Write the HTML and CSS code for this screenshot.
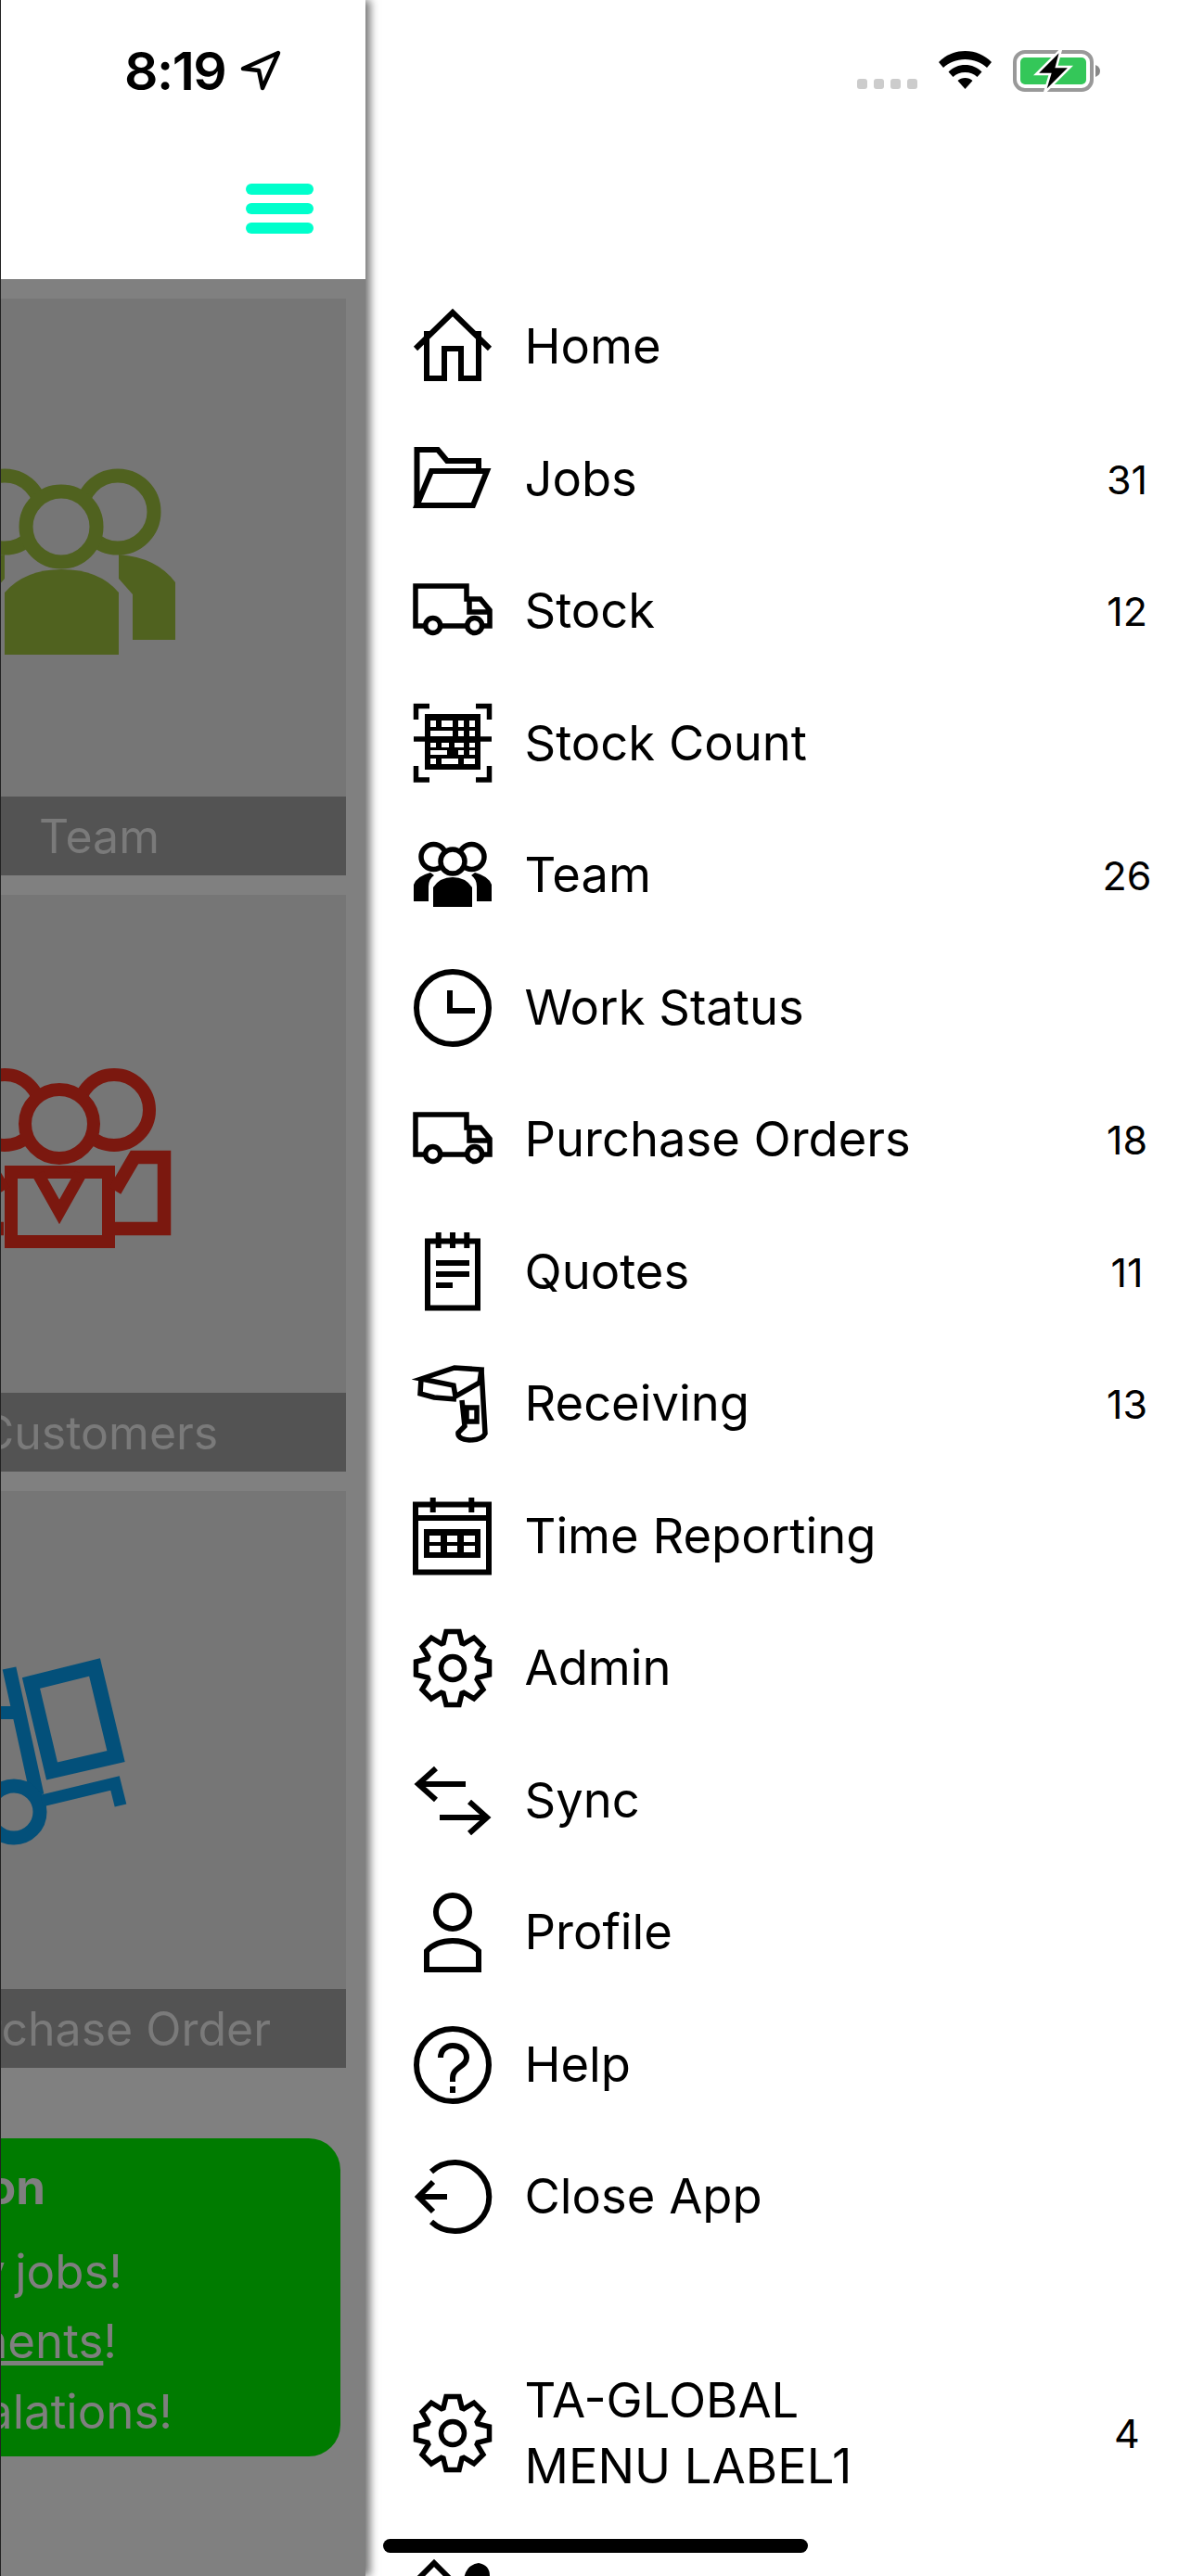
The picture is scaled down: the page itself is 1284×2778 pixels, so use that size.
FILE: index.html
```html
<!DOCTYPE html>
<html>
<head>
  <title>Menu</title>
  <link rel="stylesheet" href="styles.css">
</head>
<body>
  <svg class="defs">
    <symbol id="icon-truck" viewBox="0 0 88 88">
      <path class="line-5" d="M13 60H4V17H59V31H74L84 43V60H76M32 60H58M62 31V45H84"/>
      <circle class="line-5" cx="22.7" cy="59.5" r="8"/>
      <circle class="line-5" cx="67.7" cy="59.5" r="8"/>
    </symbol>
    <symbol id="icon-gear" viewBox="0 0 88 88">
      <polygon class="line-5" points="34,17 37,4.5 51,4.5 54,17 56,17.8 67,11.1 76.9,21 70.2,32 71,34 83.5,37 83.5,51 71,54 70.2,56 76.9,67 67,76.9 56,70.2 54,71 51,83.5 37,83.5 34,71 31.8,70.2 21,76.9 11.1,67 17.8,56 17,54 4.5,51 4.5,37 17,34 17.8,32 11.1,21 21,11.1 32,17.8"/>
      <circle class="line-5" cx="44" cy="44" r="12.5"/>
    </symbol>
  </svg>

  <div class="screen">
    <div class="app">
      <div class="app-header">
        <div class="time-row">
          <span class="time">8:19</span>
          <svg class="location" viewBox="0 0 46 44"><path d="M41 3L3 20L20 22L24 41Z" fill="#fff" stroke="#000" stroke-width="4.5" stroke-linejoin="round"/></svg>
        </div>
        <div class="burger"><i></i><i></i><i></i></div>
      </div>

      <div class="tile">
        <div class="tile-art">
          <svg class="tile-icon" viewBox="0 0 260 210" fill="#50621f">
            <circle cx="68" cy="51" r="39" fill="none" stroke="#50621f" stroke-width="15"/>
            <circle cx="190" cy="51" r="39" fill="none" stroke="#50621f" stroke-width="15"/>
            <circle cx="129" cy="67" r="38" fill="#767676" stroke="#50621f" stroke-width="15"/>
            <path d="M68 205V138Q90 113 129.5 113Q170 113 191 138V205Z"/>
            <path d="M191 97Q232 100 252 127V189H206V140L191 123Z"/>
            <path d="M68 97Q27 100 7 127V189H53V140L68 123Z"/>
          </svg>
        </div>
        <div class="tile-label">Team</div>
      </div>

      <div class="tile">
        <div class="tile-art">
          <svg class="tile-icon" viewBox="0 0 260 210" fill="none" stroke="#7b180f" stroke-width="14">
            <circle cx="68" cy="53" r="38"/>
            <circle cx="186" cy="53" r="38"/>
            <circle cx="127" cy="68" r="37" fill="#767676"/>
            <path d="M75 113V195H180V113M68 120H187"/>
            <path d="M104 122L127 163L150 122" stroke-width="13"/>
            <path d="M187 181H240V104H208L187 140" stroke-width="14.5"/>
            <path d="M67 181H14V104H46L67 140" stroke-width="14.5"/>
          </svg>
        </div>
        <div class="tile-label">Customers</div>
      </div>

      <div class="tile">
        <div class="tile-art">
          <svg class="tile-icon" viewBox="0 0 260 210" fill="none" stroke="#03507a" stroke-width="15">
            <polygon points="96.5,28 165,11 188,107 119,123" stroke-width="16"/>
            <path d="M73 12L103 149"/>
            <path d="M63 60H81" stroke-width="14"/>
            <circle cx="78" cy="167" r="28"/>
            <path d="M108 155L187 136L193 160" stroke-width="13"/>
          </svg>
        </div>
        <div class="tile-label">Purchase Order</div>
      </div>

      <div class="note">
        <div class="note-title">Information</div>
        <div class="note-line note-jobs">Today jobs!</div>
        <div class="note-line note-shipments"><div><u>Shipments</u>!</div></div>
        <div class="note-line note-escalations">Escalations!</div>
      </div>
    </div>

    <div class="drawer">
      <div class="drawer-status">
        <div class="signal"><i></i><i></i><i></i><i></i></div>
        <svg class="wifi" viewBox="0 0 57 41">
          <path d="M28.5 0C17 0 7.500 4.500 0 12L5 18C11 12.500 19 9 28.500 9C38 9 46 12.500 52 18L57 12C49.500 4.500 40 0 28.500 0Z"/>
          <path d="M28.500 15C21.500 15 15.500 17.500 10.500 22.500L15.500 28C19 24.500 23.500 23 28.500 23C33.500 23 38 24.500 41.500 28L46.500 22.500C41.500 17.500 35.500 15 28.500 15Z"/>
          <path d="M28.500 29C25.500 29 22.500 30 20.500 32L28.500 41L36.500 32C34.500 30 31.500 29 28.500 29Z"/>
        </svg>
        <svg class="battery" viewBox="0 0 96 47">
          <rect x="2" y="3" width="83" height="41" rx="11" fill="none" stroke="#999" stroke-width="4"/>
          <rect x="8" y="9" width="71" height="29" rx="5" fill="#34c759"/>
          <path d="M89 17Q94 19 94 23.500Q94 28 89 30Z" fill="#888"/>
          <path d="M52 0L25 27H40L34 47L62 19H47Z" fill="#000" stroke="#fff" stroke-width="2.500"/>
        </svg>
      </div>

      <div class="menu">
        <div class="row">
          <svg class="icon" viewBox="0 0 88 88"><path class="line-6" d="M4 46L44 7L84 46M16 27V78H35V46H53V78H72V27"/></svg>
          <span class="label">Home</span>
        </div>
        <div class="row">
          <svg class="icon" viewBox="0 0 88 88"><path class="line-6" d="M5.500 72V12H28L38 24H72V33M5.500 72L21 35H81L66 72Z"/></svg>
          <span class="label">Jobs</span>
          <span class="count">31</span>
        </div>
        <div class="row">
          <svg class="icon"><use href="#icon-truck"/></svg>
          <span class="label">Stock</span>
          <span class="count">12</span>
        </div>
        <div class="row">
          <svg class="icon" viewBox="0 0 88 88">
            <path class="line-5" d="M19 3.500H4.500V18M69 3.500H83.500V18M19 83H4.500V68M69 83H83.500V68"/>
            <rect x="14" y="12" width="60" height="60"/>
            <path class="line-5" d="M2 39H86"/>
            <g fill="#fff">
              <rect x="20" y="19" width="6" height="7"/><rect x="32" y="19" width="12" height="7"/><rect x="50" y="19" width="6" height="7"/><rect x="62" y="19" width="6" height="7"/>
              <rect x="20" y="30" width="24" height="6"/><rect x="50" y="30" width="6" height="6"/><rect x="62" y="30" width="6" height="6"/>
              <rect x="20" y="43" width="6" height="5"/><rect x="32" y="43" width="8" height="5"/><rect x="46" y="43" width="10" height="5"/><rect x="62" y="43" width="6" height="5"/>
              <rect x="20" y="51" width="18" height="5"/><rect x="50" y="51" width="6" height="5"/><rect x="62" y="51" width="6" height="5"/>
              <rect x="20" y="60" width="6" height="6"/><rect x="32" y="60" width="18" height="6"/><rect x="56" y="60" width="12" height="6"/>
            </g>
          </svg>
          <span class="label">Stock Count</span>
        </div>
        <div class="row">
          <svg class="icon" viewBox="0 0 88 88">
            <circle class="line-5" cx="23.500" cy="24" r="13.500"/>
            <circle class="line-5" cx="64.500" cy="24" r="13.500"/>
            <circle class="line-5" cx="44" cy="29" r="13" fill="#fff"/>
            <path d="M23 78V57Q30 46 44 46Q58 46 65 57V78Z"/>
            <path d="M2 72V54Q5 45 20 41L24 44Q18 48 18 56V72Z"/>
            <path d="M86 72V54Q83 45 68 41L64 44Q70 48 70 56V72Z"/>
          </svg>
          <span class="label">Team</span>
          <span class="count">26</span>
        </div>
        <div class="row">
          <svg class="icon" viewBox="0 0 88 88">
            <circle class="line-6" cx="44" cy="44" r="39"/>
            <path class="line-6" d="M41 25V47H68"/>
          </svg>
          <span class="label">Work Status</span>
        </div>
        <div class="row">
          <svg class="icon"><use href="#icon-truck"/></svg>
          <span class="label">Purchase Orders</span>
          <span class="count">18</span>
        </div>
        <div class="row">
          <svg class="icon" viewBox="0 0 88 88">
            <rect class="line-6" x="17" y="10.500" width="54" height="72"/>
            <path class="line-6" d="M28.700 1V18M44 1V18M59.300 1V18M26 34H62M26 46H62M26 58H44"/>
          </svg>
          <span class="label">Quotes</span>
          <span class="count">11</span>
        </div>
        <div class="row">
          <svg class="icon" viewBox="0 0 88 88">
            <path class="line-5" d="M10 17L46 5L75 7L73 21L47 36L45 24Z"/>
            <path class="line-5" d="M10 17L9 33L24 37L48 39"/>
            <path class="line-5" d="M54 40L57 68L50 75Q49 82 62 83Q76 83 79 76L75 7"/>
            <rect class="line-5" x="59" y="48" width="11" height="15"/>
          </svg>
          <span class="label">Receiving</span>
          <span class="count">13</span>
        </div>
        <div class="row">
          <svg class="icon" viewBox="0 0 88 88">
            <rect class="line-6" x="4" y="9.500" width="79" height="73"/>
            <path class="line-6" d="M22.700 2V18M64.300 2V18M4 24H83"/>
            <rect x="13" y="36" width="61" height="31"/>
            <g fill="#fff">
              <rect x="19" y="43" width="12" height="7"/><rect x="38" y="43" width="11" height="7"/><rect x="56" y="43" width="12" height="7"/>
              <rect x="19" y="54" width="12" height="7"/><rect x="38" y="54" width="11" height="7"/><rect x="56" y="54" width="12" height="7"/>
            </g>
          </svg>
          <span class="label">Time Reporting</span>
        </div>
        <div class="row">
          <svg class="icon"><use href="#icon-gear"/></svg>
          <span class="label">Admin</span>
        </div>
        <div class="row">
          <svg class="icon" viewBox="0 0 88 88"><path class="line-6" d="M8 26H58M26 9L7 26L26 43M30 62H80M62 45L81 62L62 79"/></svg>
          <span class="label">Sync</span>
        </div>
        <div class="row">
          <svg class="icon" viewBox="0 0 88 88">
            <circle class="line-6" cx="44" cy="22" r="18"/>
            <path class="line-6" d="M16 84V64Q26 53 44 53Q62 53 72 64V84Z"/>
          </svg>
          <span class="label">Profile</span>
        </div>
        <div class="row">
          <svg class="icon" viewBox="0 0 88 88">
            <circle class="line-6" cx="44" cy="44" r="39"/>
            <path class="line-6" d="M31 36C31 28 37 23 44 23C52 23 59 28 59 36C59 46 44 46 44 58V62"/>
            <rect x="41" y="67" width="6" height="7"/>
          </svg>
          <span class="label">Help</span>
        </div>
        <div class="row">
          <svg class="icon" viewBox="0 0 88 88"><path class="line-6" d="M21 17A37 37 0 1 1 21 71M38 44H8M23 28L7 44L23 60"/></svg>
          <span class="label">Close App</span>
        </div>
        <div class="row row-tall">
          <svg class="icon"><use href="#icon-gear"/></svg>
          <span class="label">TA-GLOBAL<br>MENU LABEL1</span>
          <span class="count">4</span>
        </div>
        <div class="row">
          <svg class="icon" viewBox="0 0 88 88">
            <path class="line-6" d="M6 24L24 6L42 24"/>
            <path d="M56 24Q58 8 72 6Q84 8 84 20Q72 22 62 32Z"/>
          </svg>
        </div>
      </div>
    </div>

    <div class="home-bar"></div>
  </div>
</body>
</html>
```

FILE: styles.css
```css
* {
  box-sizing: border-box;
}
body {
  margin: 0;
  font-family: Inter, "Liberation Sans", sans-serif;
  background: #fff;
}
.defs {
  display: none;
}
.screen {
  position: relative;
  display: flex;
  width: 1284px;
  height: 2778px;
  overflow: hidden;
}

/* app behind the drawer */
.app {
  position: relative;
  z-index: 2;
  flex: none;
  width: 394px;
  height: 2778px;
  overflow: hidden;
  background: #808080;
  border-left: 1px solid #222;
  box-shadow: 5px 0 9px rgba(0,0,0,0.55);
}
.app-header {
  height: 301px;
  padding: 45px 0 0 133px;
  background: #fff;
}
.time-row {
  display: flex;
  align-items: center;
  gap: 16px;
  height: 62px;
}
.time {
  font-size: 57px;
  font-weight: 600;
  letter-spacing: -1.500px;
  color: #000;
}
.location {
  width: 46px;
  height: 44px;
}
.burger {
  display: flex;
  flex-direction: column;
  gap: 9px;
  width: 73px;
  margin: 91px 0 0 131px;
}
.burger i {
  display: block;
  height: 12px;
  border-radius: 6px;
  background: #00ffcc;
}
.tile {
  display: flex;
  flex-direction: column;
  width: 532px;
  height: 622px;
  margin: 21px 0 0 -160px;
}
.tile-art {
  flex: 1;
  display: flex;
  align-items: center;
  justify-content: center;
  padding: 30px 80px 0 0;
  background: #767676;
}
.tile-icon {
  width: 260px;
  height: 210px;
}
.tile-label {
  height: 85px;
  padding-top: 1px;
  line-height: 85px;
  text-align: center;
  font-size: 50px;
  color: #7a7a7a;
  background: #535353;
}
.note {
  width: 526px;
  height: 343px;
  margin: 76px 0 0 -160px;
  padding-top: 15px;
  border-radius: 34px;
  background: #007b00;
  color: #7f7f7f;
  font-size: 51px;
  line-height: 75.5px;
}
.note-title {
  display: flex;
  justify-content: flex-end;
  margin: 0 318px 15px 0;
  font-weight: 700;
  white-space: nowrap;
}
.note-line {
  display: flex;
  justify-content: flex-end;
  white-space: nowrap;
}
.note-jobs {
  margin-right: 235px;
  word-spacing: -4px;
}
.note-shipments {
  margin-right: 241px;
}
.note-escalations {
  margin-right: 181px;
}

/* drawer */
.drawer {
  flex: 1;
  height: 2778px;
  background: #fff;
}
.drawer-status {
  display: flex;
  align-items: flex-start;
  justify-content: flex-end;
  height: 303px;
  padding: 54px 96px 0 0;
}
.signal {
  display: flex;
  gap: 7px;
  margin: 31px 23px 0 0;
}
.signal i {
  width: 11px;
  height: 11px;
  border-radius: 3px;
  background: #ccc;
}
.wifi {
  width: 57px;
  height: 41px;
  margin: 1px 23px 0 0;
}
.battery {
  width: 96px;
  height: 47px;
  margin-top: -1px;
}
.menu {
  padding: 0 19px 0 50px;
}
.row {
  display: flex;
  align-items: center;
  gap: 33.5px;
  height: 142.5px;
}
.row-tall {
  height: 213px;
  margin-top: 77px;
}
.icon {
  flex: none;
  width: 88px;
  height: 88px;
}
.label {
  flex: 1;
  padding-bottom: 1px;
  font-size: 52.5px;
  line-height: 71px;
  color: #000;
}
.count {
  width: 100px;
  text-align: center;
  font-size: 43px;
  color: #000;
}
.line-5, .line-6 {
  fill: none;
  stroke: #000;
}
.line-5 {
  stroke-width: 5.5;
}
.line-6 {
  stroke-width: 6;
}
circle.line-5[fill="#fff"] {
  fill: #fff;
}
.home-bar {
  position: absolute;
  left: 413px;
  top: 2738px;
  width: 458px;
  height: 15px;
  border-radius: 8px;
  background: #000;
}
```
